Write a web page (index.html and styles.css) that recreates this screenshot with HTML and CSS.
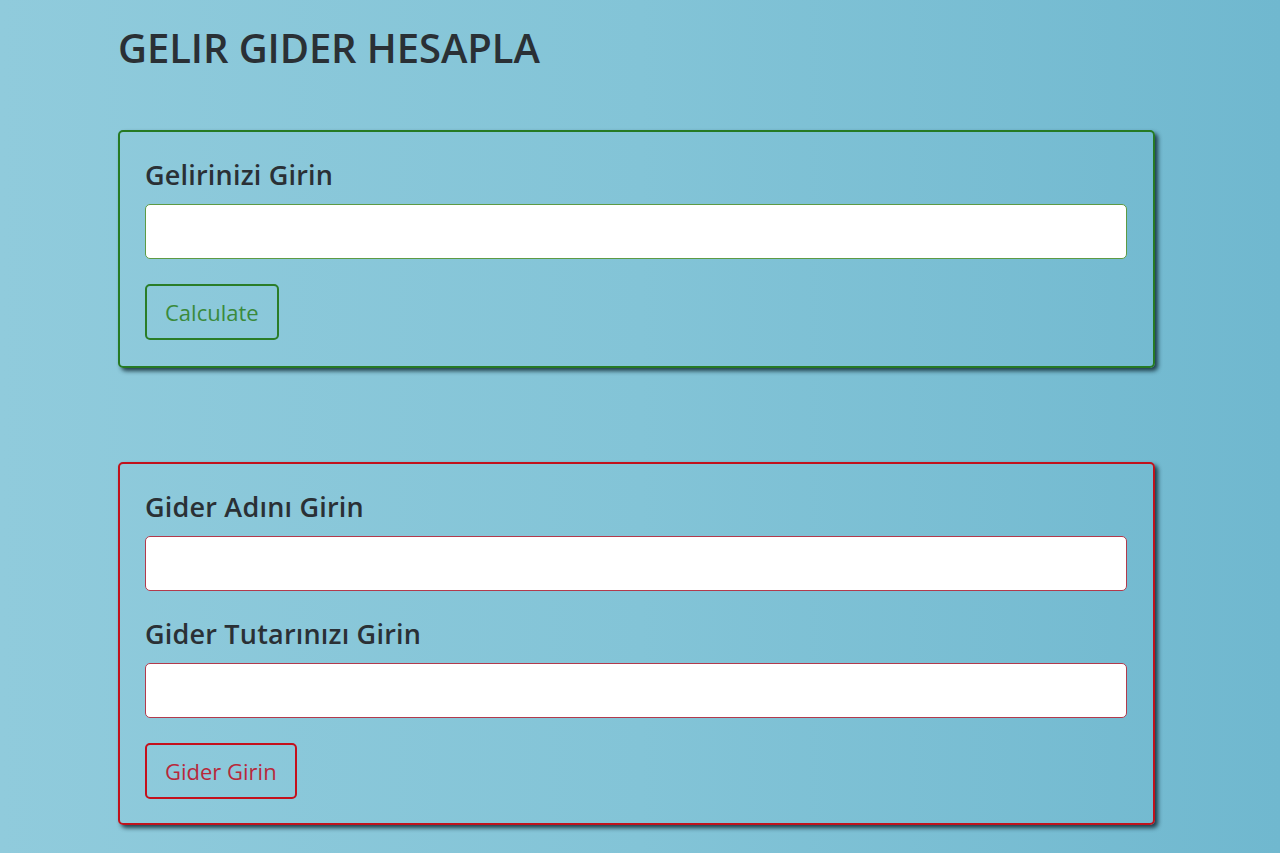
FILE: index.html
```html
<!DOCTYPE html>
<html lang="tr">
<head>
<meta charset="utf-8">
<title>Gelir Gider Hesapla</title>
<link rel="stylesheet" href="styles.css">
</head>
<body>
<main class="page">
  <h1 class="title">GELIR GIDER HESAPLA</h1>

  <section class="card card-income">
    <label class="field-label" for="income">Gelirinizi Girin</label>
    <input class="field-input" id="income" type="text">
    <button class="btn btn-income" type="button">Calculate</button>
  </section>

  <section class="card card-expense">
    <label class="field-label" for="expense-name">Gider Adını Girin</label>
    <input class="field-input" id="expense-name" type="text">
    <label class="field-label" for="expense-amount">Gider Tutarınızı Girin</label>
    <input class="field-input" id="expense-amount" type="text">
    <button class="btn btn-expense" type="button">Gider Girin</button>
  </section>
</main>
</body>
</html>
```
FILE: styles.css
```css
* { box-sizing: border-box; }

html, body {
  margin: 0;
  height: 100%;
}

body {
  font-family: "Open Sans", "Noto Sans", sans-serif;
  color: #2a3035;
  background: linear-gradient(to right, #90cbdc 0%, #83c4d7 50%, #70b8cf 100%);
  overflow: hidden;
}

.page {
  width: 1037px;
  margin-left: 118px;
  padding-top: 24px;
  display: flex;
  flex-direction: column;
}

.title {
  margin: 0 0 58px 0;
  font-size: 40px;
  font-weight: 600;
  line-height: 48px;
  letter-spacing: -0.1px;
}

.card {
  display: flex;
  flex-direction: column;
  align-items: flex-start;
  padding: 27px 26px 26px 25px;
  border: 2px solid;
  border-radius: 5px;
  box-shadow: 3px 3px 4px rgba(15, 40, 50, 0.85);
}

.card-income {
  border-color: #267a24;
  margin-bottom: 94px;
}

.card-expense {
  border-color: #c0121c;
  padding-bottom: 24px;
}

.field-label {
  font-size: 27px;
  font-weight: 600;
  line-height: 32px;
  letter-spacing: 0.2px;
  margin-bottom: 13px;
}

.field-input {
  width: 100%;
  height: 55px;
  background: #fff;
  border: 1px solid;
  border-radius: 5px;
  margin: 0 0 25px 0;
  font: inherit;
}

.field-input + .field-label {
  margin-top: 2px;
}

.card-income .field-input { border-color: #5e9a44; }
.card-expense .field-input { border-color: #b23a4c; }

.btn {
  height: 56px;
  padding: 0 18px;
  background: transparent;
  border: 2px solid;
  border-radius: 5px;
  font-family: "Open Sans", "Noto Sans", sans-serif;
  font-size: 22px;
  font-weight: 400;
}

.btn-income {
  border-color: #2a7d28;
  color: #3a8a3a;
}

.btn-expense {
  border-color: #c4101c;
  color: #b8283a;
}
```
